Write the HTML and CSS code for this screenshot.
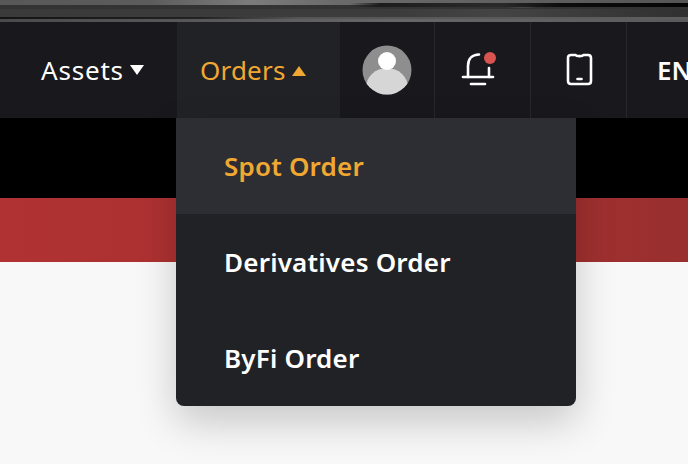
FILE: index.html
```html
<!DOCTYPE html>
<html lang="en">
<head>
    <meta charset="UTF-8">
    <meta name="viewport" content="width=device-width, initial-scale=1.0">
    <title>Orders menu</title>
    <link rel="stylesheet" href="styles.css">
</head>
<body>
    <div class="top-strip"></div>
    <nav class="navbar">
        <div class="nav-item assets">
            <span>Assets</span>
            <i class="arrow-down"></i>
        </div>
        <div class="nav-item orders">
            <span>Orders</span>
            <i class="arrow-up"></i>
            <div class="dropdown">
                <div class="dropdown-item active">Spot Order</div>
                <div class="dropdown-item">Derivatives Order</div>
                <div class="dropdown-item">ByFi Order</div>
            </div>
        </div>
        <div class="nav-item avatar-cell">
            <svg width="50" height="50" viewBox="0 0 50 50">
                <defs>
                    <clipPath id="avatar-clip"><circle cx="25" cy="25" r="24.5"/></clipPath>
                </defs>
                <circle cx="25" cy="25" r="24.5" fill="#8e8e8e"/>
                <g clip-path="url(#avatar-clip)">
                    <ellipse cx="25" cy="43" rx="21" ry="20" fill="#d6d6d6"/>
                </g>
                <circle cx="25" cy="16" r="9" fill="#fff"/>
            </svg>
        </div>
        <div class="nav-item icon-cell">
            <svg width="44" height="44" viewBox="0 0 44 44" fill="none" stroke="#fff" stroke-width="2.6" stroke-linecap="round">
                <path d="M7 29V18C7 11 11 6.500 18 6.500"/>
                <path d="M28 20V29"/>
                <path d="M2 29H32"/>
                <path d="M10 36H24"/>
                <circle cx="29" cy="10" r="6" fill="#d9534f" stroke="none"/>
            </svg>
        </div>
        <div class="nav-item icon-cell">
            <svg width="28" height="34" viewBox="0 0 28 34" fill="none" stroke="#fff" stroke-width="2.6" stroke-linecap="round" stroke-linejoin="round">
                <path d="M6 2H10.500C11.500 3.500 17.500 3.500 18.500 2H23C25 2 26 3 26 5V28C26 30 25 31 23 31H6C4 31 3 30 3 28V5C3 3 4 2 6 2Z"/>
                <path d="M12.500 26H16.500"/>
            </svg>
        </div>
        <div class="nav-item lang">EN</div>
    </nav>
    <div class="black-band"></div>
    <div class="red-band"></div>
</body>
</html>
```

FILE: styles.css
```css
html, body {
    height: 100%;
}

body {
    margin: 0;
    overflow: hidden;
    background-color: #f8f8f8;
    font-family: "Noto Sans", Roboto, sans-serif;
}

/* blurred photo edge above the navbar */
.top-strip {
    height: 22px;
    background-repeat: no-repeat;
    background-image:
        radial-gradient(ellipse 26px 3px at 522px 6px, rgba(190, 190, 190, 0.75), transparent),
        linear-gradient(90deg, transparent 350px, #1c1c1c 380px, #2a2a2a 500px, #0c0c0c 560px, #050505 100%),
        linear-gradient(90deg, #585858 0, #5c5c5c 150px, #7c7c7c 250px, #6a6a6a 340px, #555 100%),
        linear-gradient(90deg, #3a3a3a 0, #3c3c3c 400px, #444 500px, #303030 100%),
        linear-gradient(90deg, #141414 0, #222 200px, #555 300px, #5e5e5e 100%),
        linear-gradient(90deg, #4a4a4a 0, #666 400px, #5a5a5a 100%),
        linear-gradient(#333, #333);
    background-size: 100% 4px, 100% 4px, 100% 5px, 100% 8px, 100% 2px, 100% 3px, 100% 100%;
    background-position: 0 4px, 0 3px, 0 0, 0 9px, 0 17px, 0 19px, 0 0;
}

.navbar {
    display: flex;
    height: 96px;
    background: #18181d;
    color: #fff;
}

.nav-item {
    display: flex;
    flex: none;
    align-items: center;
    justify-content: center;
    box-sizing: border-box;
}

.assets {
    width: 177px;
    padding-left: 41px;
    justify-content: flex-start;
    font-size: 26px;
    letter-spacing: 0.8px;
}

.orders {
    position: relative;
    width: 163px;
    padding-left: 23px;
    justify-content: flex-start;
    background: #212226;
    color: #f0a832;
    font-size: 26px;
    letter-spacing: 0.2px;
}

.arrow-down {
    margin: 0 0 0 6px;
    border-left: 7px solid transparent;
    border-right: 7px solid transparent;
    border-top: 10px solid #fff;
}

.arrow-up {
    margin: 2px 0 0 6px;
    border-left: 7px solid transparent;
    border-right: 7px solid transparent;
    border-bottom: 10px solid #f0a832;
}

.avatar-cell {
    width: 95px;
    border-right: 1px solid #26262b;
}

.icon-cell {
    width: 96px;
    border-right: 1px solid #26262b;
}

.lang {
    padding-left: 30px;
    font-size: 26px;
    font-weight: 600;
}

.dropdown {
    position: absolute;
    top: 96px;
    left: -1px;
    z-index: 2;
    width: 400px;
    overflow: hidden;
    background: #212226;
    border-radius: 0 0 8px 8px;
    box-shadow: 0 16px 40px rgba(0, 0, 0, 0.2);
}

.dropdown-item {
    height: 96px;
    padding-left: 48px;
    line-height: 96px;
    font-size: 26px;
    font-weight: 600;
    letter-spacing: 0.2px;
    color: #fff;
}

.dropdown-item.active {
    background: #2d2e33;
    color: #f0a832;
}

.black-band {
    height: 80px;
    background: #000;
}

.red-band {
    height: 64px;
    background: linear-gradient(90deg, #b03232 0%, #aa3030 60%, #992f2f 100%);
}
```
